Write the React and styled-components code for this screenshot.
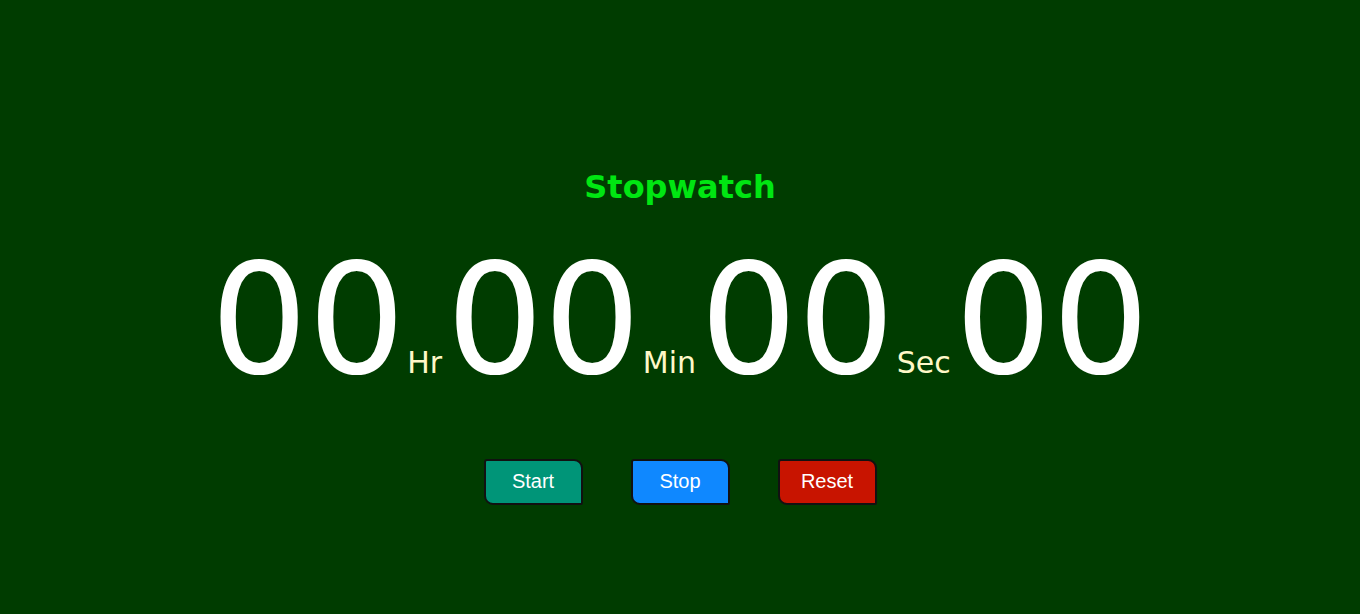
import styled, { createGlobalStyle } from 'styled-components';

const GlobalStyle = createGlobalStyle`
  html, body {
    margin: 0;
    padding: 0;
    background-color: #003c00;
  }
`;

const Page = styled.div`
  width: 100%;
  height: 614px;
  display: flex;
  flex-direction: column;
  align-items: center;
  padding-top: 168px;
  box-sizing: border-box;
  font-family: "DejaVu Sans", Verdana, sans-serif;
`;

const Title = styled.h1`
  margin: 0;
  font-weight: bold;
  font-size: 32px;
  color: #00e612;
`;

const Clock = styled.div`
  display: flex;
  align-items: baseline;
  margin-top: 23px;
  line-height: 1.2;
`;

const Digits = styled.span`
  font-size: 153px;
  color: #ffffff;
`;

const Unit = styled.span`
  font-size: 30px;
  color: #fff8c8;
  margin: 0 4px 0 2px;
`;

const Controls = styled.div`
  display: flex;
  gap: 48px;
  margin-top: 46px;
`;

const Button = styled.button`
  width: 99px;
  height: 46px;
  border: 2px solid #111;
  border-radius: 3px 9px 2px 9px;
  background-color: ${(p) => p.$bg};
  color: #fff;
  font-family: "Liberation Sans", Arial, sans-serif;
  font-size: 20px;
  cursor: pointer;
`;

const units = ['Hr', 'Min', 'Sec'];

const App = () => {
  return (
    <>
      <GlobalStyle />
      <Page>
        <Title>Stopwatch</Title>
        <Clock>
          {units.map((u) => (
            <span key={u}>
              <Digits>00</Digits>
              <Unit>{u}</Unit>
            </span>
          ))}
          <Digits>00</Digits>
        </Clock>
        <Controls>
          <Button $bg="#009578">Start</Button>
          <Button $bg="#0f88ff">Stop</Button>
          <Button $bg="#c81400">Reset</Button>
        </Controls>
      </Page>
    </>
  );
};

export default App;
